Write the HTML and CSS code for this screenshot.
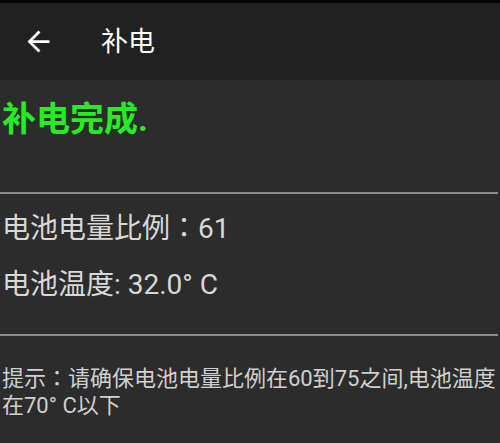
FILE: index.html
```html
<!DOCTYPE html>
<html lang="zh-CN">
<head>
<meta charset="utf-8">
<title>补电</title>
<link rel="stylesheet" href="styles.css">
</head>
<body>
<div class="status"></div>
<header class="toolbar">
  <svg class="back" viewBox="0 0 24 24" width="33" height="33" aria-hidden="true">
    <path d="M20 11H7.83l5.59-5.59L12 4l-8 8 8 8 1.41-1.41L7.83 13H20v-2z" fill="#ffffff"/>
  </svg>
  <div class="title">补电</div>
</header>
<main class="content">
  <div class="result">补电完成.</div>
  <hr class="divider divider-top">
  <div class="info" lang="ja">电池电量比例：61</div>
  <div class="info">电池温度: 32.0° C</div>
  <hr class="divider divider-bottom">
  <div class="hint" lang="ja">提示：请确保电池电量比例在60到75之间,电池温度在70° C以下</div>
</main>
</body>
</html>
```

FILE: styles.css
```css
html, body {
  margin: 0;
  padding: 0;
}
body {
  width: 500px;
  height: 443px;
  overflow: hidden;
  background: #2c2c2c;
  font-family: Roboto, "Noto Sans CJK SC", sans-serif;
}
.status {
  height: 3px;
  background: #000;
}
.toolbar {
  height: 77px;
  background: #212121;
  display: flex;
  align-items: center;
}
.back {
  display: block;
  margin-left: 22px;
  flex: none;
}
.title {
  margin-left: 46px;
  color: #ffffff;
  font-size: 27px;
  line-height: 40px;
  font-weight: 400;
}
.content {
  padding: 0 0 0 2px;
}
.result {
  margin-top: 19px;
  color: #26ec26;
  font-size: 34px;
  font-weight: 700;
  line-height: 40px;
}
.divider {
  border: 0;
  height: 2px;
  background: #8c8c8c;
  margin: 0 2px 0 -2px;
}
.divider-top {
  margin-top: 53px;
}
.info {
  color: #d8d8d8;
  font-size: 28px;
  line-height: 56px;
}
.divider-top + .info {
  margin-top: 7px;
}
.divider-bottom {
  margin-top: 21px;
}
.hint {
  margin-top: 29px;
  color: #d0d0d0;
  font-size: 22px;
  line-height: 27px;
}
```
